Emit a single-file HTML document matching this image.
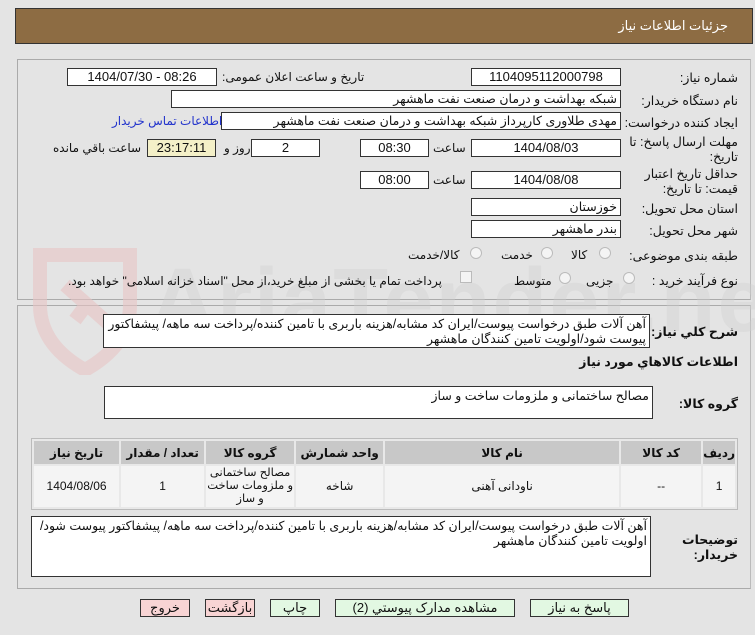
<!DOCTYPE html><html><head><meta charset="utf-8"><style>
*{box-sizing:border-box}
body{margin:0;width:755px;height:635px;background:#e4e4e4;font-family:"Liberation Sans","DejaVu Sans",sans-serif;font-size:12px;color:#111;position:relative;overflow:hidden}
.a{position:absolute;white-space:nowrap;direction:rtl}
.hd{left:15px;top:8px;width:738px;height:36px;background:#8d6c43;border:1px solid #333}
.hd span{position:absolute;right:24px;top:9px;color:#fff;font-size:13px}
.pn{border:1px solid #aaa;border-right-color:#bbb}
.bx{position:absolute;background:#fff;border:1px solid #333;height:18px;text-align:center;line-height:16px;font-size:13px}
.bx.r{text-align:right;padding-right:3px;direction:rtl;overflow:hidden;white-space:nowrap;font-size:12.5px}
.l{position:absolute;right:17px;text-align:right;direction:rtl;white-space:nowrap;font-size:12.5px}
.rd{position:absolute;width:12px;height:12px;border-radius:50%;border:1px solid #bbb;background:#f4f4f4}
.ta{position:absolute;background:#fff;border:1px solid #333;direction:rtl;text-align:right;padding:2px 3px;font-size:12.5px;line-height:15px}
table{position:absolute;left:31px;top:438px;width:707px;border-collapse:separate;border-spacing:2px;background:#e8e8e8;border:1px solid #bbb;direction:rtl}
th{background:#c8c8c8;height:23px;font-size:12px;padding:0}
td{background:#f4f4f4;height:41px;text-align:center;font-size:12px;line-height:13px;padding:0}
.bt{position:absolute;top:599px;height:18px;border:1px solid #333;text-align:center;line-height:16px;font-size:13px;direction:rtl}
.g{background:#e2f8e2}.p{background:#f8d4d4}
</style></head><body>
<div class="a hd"><span>جزئیات اطلاعات نیاز</span></div>
<div class="a pn" style="left:17px;top:59px;width:734px;height:241px"></div>
<div class="a pn" style="left:17px;top:305px;width:734px;height:284px"></div>
<svg class="a" style="left:20px;top:245px;direction:ltr" width="130" height="130" viewBox="0 0 130 130"><path d="M20 10 H110 V60 Q110 100 65 125 Q20 100 20 60 Z" fill="none" stroke="#e8c4c4" stroke-width="14" opacity=".6"/><path d="M45 40 L90 80 M70 55 L55 75" stroke="#e8c4c4" stroke-width="14" opacity=".6"/></svg>
<div class="a" style="left:150px;top:250px;font-size:90px;font-weight:bold;color:#d0d0d0;opacity:.35;letter-spacing:2px;direction:ltr">AriaTender.net</div>

<div class="l" style="top:70px">شماره نیاز:</div>
<div class="bx" style="left:471px;top:68px;width:150px">1104095112000798</div>
<div class="a" style="left:222px;top:70px">تاریخ و ساعت اعلان عمومی:</div>
<div class="bx" style="left:67px;top:68px;width:150px">1404/07/30 - 08:26</div>

<div class="l" style="top:93px">نام دستگاه خریدار:</div>
<div class="bx r" style="left:171px;top:90px;width:450px">شبکه بهداشت و درمان صنعت نفت ماهشهر</div>

<div class="l" style="top:115px">ایجاد کننده درخواست:</div>
<div class="bx r" style="left:221px;top:112px;width:400px">مهدی طلاوری کارپرداز شبکه بهداشت و درمان صنعت نفت ماهشهر</div>
<div class="a" style="left:112px;top:114px;color:#2233cc">اطلاعات تماس خریدار</div>

<div class="l" style="top:135px;line-height:15px">مهلت ارسال پاسخ: تا<br>تاریخ:</div>
<div class="bx" style="left:471px;top:139px;width:150px">1404/08/03</div>
<div class="a" style="left:433px;top:141px">ساعت</div>
<div class="bx" style="left:360px;top:139px;width:69px">08:30</div>
<div class="bx" style="left:251px;top:139px;width:69px">2</div>
<div class="a" style="left:224px;top:141px">روز و</div>
<div class="bx" style="left:147px;top:139px;width:69px;background:#f4f0c8">23:17:11</div>
<div class="a" style="left:53px;top:141px">ساعت باقي مانده</div>

<div class="l" style="top:167px;line-height:15px">حداقل تاریخ اعتبار<br>قیمت: تا تاریخ:</div>
<div class="bx" style="left:471px;top:171px;width:150px">1404/08/08</div>
<div class="a" style="left:433px;top:173px">ساعت</div>
<div class="bx" style="left:360px;top:171px;width:69px">08:00</div>

<div class="l" style="top:201px">استان محل تحویل:</div>
<div class="bx r" style="left:471px;top:198px;width:150px">خوزستان</div>
<div class="l" style="top:223px">شهر محل تحویل:</div>
<div class="bx r" style="left:471px;top:220px;width:150px">بندر ماهشهر</div>

<div class="l" style="top:248px">طبقه بندی موضوعی:</div>
<div class="rd" style="left:599px;top:247px"></div><div class="a" style="left:571px;top:248px">کالا</div>
<div class="rd" style="left:541px;top:247px"></div><div class="a" style="left:501px;top:248px">خدمت</div>
<div class="rd" style="left:470px;top:247px"></div><div class="a" style="left:408px;top:248px">کالا/خدمت</div>

<div class="l" style="top:273px">نوع فرآیند خرید :</div>
<div class="rd" style="left:623px;top:272px"></div><div class="a" style="left:586px;top:274px">جزیی</div>
<div class="rd" style="left:559px;top:272px"></div><div class="a" style="left:514px;top:274px">متوسط</div>
<div class="a" style="left:460px;top:271px;width:12px;height:12px;border:1px solid #bbb;background:#f4f4f4"></div>
<div class="a" style="left:68px;top:274px">پرداخت تمام یا بخشی از مبلغ خرید،از محل "اسناد خزانه اسلامی" خواهد بود.</div>

<div class="l" style="top:324px;font-weight:bold">شرح کلي نیاز:</div>
<div class="ta" style="left:103px;top:314px;width:547px;height:34px">آهن آلات طبق درخواست پیوست/ایران کد مشابه/هزینه باربری با تامین کننده/پرداخت سه ماهه/ پیشفاکتور پیوست شود/اولویت تامین کنندگان ماهشهر</div>
<div class="l" style="top:354px;font-weight:bold">اطلاعات کالاهاي مورد نیاز</div>
<div class="l" style="top:396px;font-weight:bold">گروه کالا:</div>
<div class="ta" style="left:104px;top:386px;width:549px;height:33px">مصالح ساختمانی و ملزومات ساخت و ساز</div>

<table><tr><th style="width:28px">ردیف</th><th style="width:80px">کد کالا</th><th style="width:234px">نام کالا</th><th style="width:87px">واحد شمارش</th><th style="width:88px">گروه کالا</th><th style="width:83px">تعداد / مقدار</th><th>تاریخ نیاز</th></tr>
<tr><td>1</td><td>--</td><td>ناودانی آهنی</td><td>شاخه</td><td style="font-size:11.5px">مصالح ساختمانی<br>و ملزومات ساخت<br>و ساز</td><td>1</td><td>1404/08/06</td></tr></table>

<div class="l" style="top:533px;font-weight:bold;line-height:15px">توضیحات<br>خریدار:</div>
<div class="ta" style="left:31px;top:516px;width:620px;height:61px">آهن آلات طبق درخواست پیوست/ایران کد مشابه/هزینه باربری با تامین کننده/پرداخت سه ماهه/ پیشفاکتور پیوست شود/اولویت تامین کنندگان ماهشهر</div>

<div class="bt p" style="left:140px;width:50px">خروج</div>
<div class="bt p" style="left:205px;width:50px">بازگشت</div>
<div class="bt g" style="left:270px;width:50px">چاپ</div>
<div class="bt g" style="left:335px;width:180px">مشاهده مدارک پیوستي (2)</div>
<div class="bt g" style="left:530px;width:99px">پاسخ به نیاز</div>
</body></html>
